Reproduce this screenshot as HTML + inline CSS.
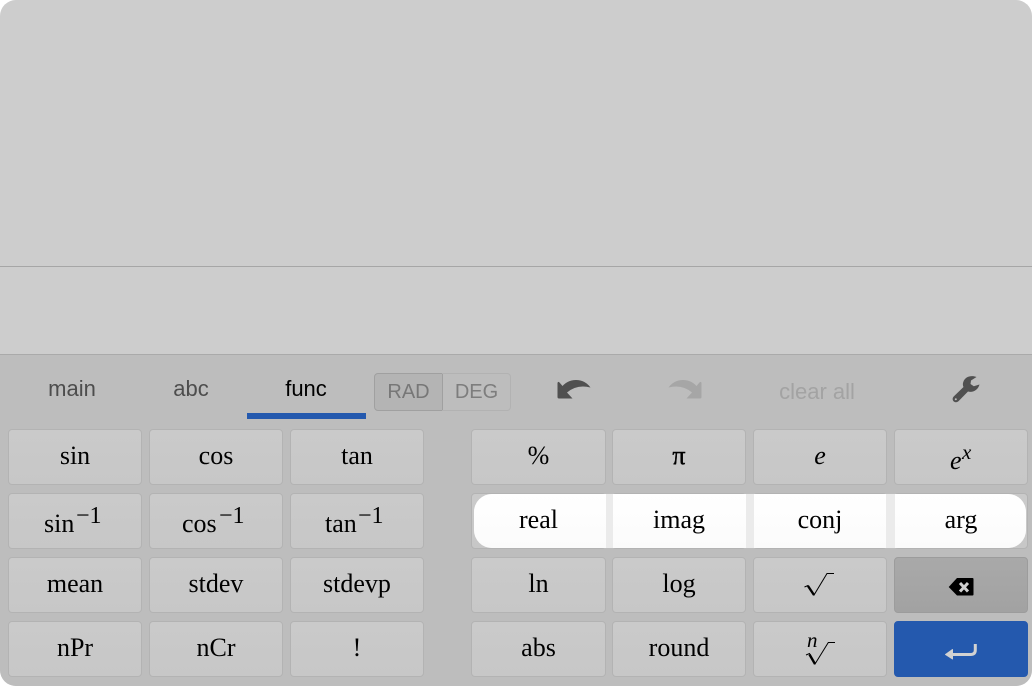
<!DOCTYPE html>
<html><head><meta charset="utf-8">
<style>
html,body{margin:0;padding:0;width:1032px;height:686px;overflow:hidden;background:#fff}
#app{position:absolute;left:0;top:0;width:1032px;height:686px;background:#cdcdcd;border-radius:16px;overflow:hidden}
.line{position:absolute;left:0;width:1032px;height:1px;background:#a6a6a6;top:266px}
#kb{position:absolute;left:0;top:354px;width:1032px;height:332px;background:#bdbdbd;border-top:1px solid #aaa;box-sizing:border-box}
.k{position:absolute;box-sizing:border-box;height:56px;border:1px solid #b3b3b3;border-radius:4px;background:linear-gradient(#cacaca,#c7c7c7);font:26px/51px "Liberation Serif",serif;color:#000;text-align:center}
.n{background:none;border-color:transparent}
.t{position:absolute;font-family:"Liberation Sans",sans-serif;white-space:nowrap;transform:translateX(-50%)}
.s{position:absolute;font:26px/30px "Liberation Serif",serif;color:#000;white-space:nowrap}
.u{position:absolute;font:24px/28px "Liberation Serif",serif;color:#000;white-space:nowrap}
i{font-family:"Liberation Serif",serif}
svg{position:absolute;overflow:visible}
</style></head><body>
<div id="app">
<div class="line"></div>
<div id="kb"></div>

<div class="t" style="left:72px;top:376px;font-size:22px;line-height:26px;color:#4d4d4d">main</div>
<div class="t" style="left:191px;top:376px;font-size:22px;line-height:26px;color:#4d4d4d">abc</div>
<div class="t" style="left:306px;top:376px;font-size:22px;line-height:26px;color:#000">func</div>
<div style="position:absolute;left:247px;top:413px;width:119px;height:6px;background:#2459ae"></div>

<div style="position:absolute;left:374px;top:373px;width:69px;height:38px;box-sizing:border-box;border:1px solid #a0a0a0;border-radius:4px 0 0 4px;background:#b4b4b4"></div>
<div style="position:absolute;left:442px;top:373px;width:69px;height:38px;box-sizing:border-box;border:1px solid #b2b2b2;border-left:0;border-radius:0 4px 4px 0"></div>
<div class="t" style="left:408.500px;top:380px;font-size:20px;line-height:24px;color:#777">RAD</div>
<div class="t" style="left:476.500px;top:380px;font-size:20px;line-height:24px;color:#7d7d7d">DEG</div>

<svg style="left:0;top:0" width="1032" height="686">
<path d="M557.500 383L557.500 397Q557.500 398.500 559 398.500L572.500 398.500L567 392.500Q577 384 590.500 387.500Q585 380 576 380Q568 380 562.500 386L559.500 382.500Q558 381 557.500 383Z" fill="#505050"/>
<path d="M701.500 383L701.500 397Q701.500 398.500 700 398.500L686.500 398.500L692 392.500Q682 384 668.500 387.500Q674 380 683 380Q691 380 696.500 386L699.500 382.500Q701 381 701.500 383Z" fill="#a6a6a6"/>
<path d="M976.500 377C971 375 964.500 376.500 963 383C962.700 384.500 963 386 963.500 387L953.700 396.500C952 398.300 952.500 400.500 954 401.600C955.500 402.700 957.500 402.300 958.700 401L968 391.500C973 392.800 978 390 979.500 384.500L973.800 386.300L970.500 384L971 380.500Z" fill="#505050"/>
<circle cx="955.800" cy="399.300" r="1" fill="#bdbdbd"/>
</svg>
<div class="t" style="left:817px;top:379px;font-size:22px;line-height:26px;color:#a3a3a3">clear all</div>

<div class="k" style="left:8px;top:429px;width:134px">sin</div>
<div class="k" style="left:149px;top:429px;width:134px">cos</div>
<div class="k" style="left:290px;top:429px;width:134px">tan</div>
<div class="k" style="left:471px;top:429px;width:135px">%</div>
<div class="k" style="left:612px;top:429px;width:134px;-webkit-text-stroke:.4px #000">π</div>
<div class="k" style="left:753px;top:429px;width:134px"><i>e</i></div>
<div class="k" style="left:894px;top:429px;width:134px"></div>
<div class="s" style="left:950px;top:446px"><i>e</i></div>
<div class="u" style="left:962px;top:438px;font-size:21px"><i>x</i></div>

<div class="k" style="left:8px;top:493px;width:134px"></div>
<div class="k" style="left:149px;top:493px;width:134px"></div>
<div class="k" style="left:290px;top:493px;width:134px"></div>
<div class="s" style="left:44px;top:509px">sin</div><div class="u" style="left:76px;top:502px">−1</div>
<div class="s" style="left:182px;top:509px">cos</div><div class="u" style="left:219px;top:502px">−1</div>
<div class="s" style="left:325px;top:509px">tan</div><div class="u" style="left:358px;top:502px">−1</div>

<div class="k" style="left:471px;top:493px;width:135px"></div>
<div class="k" style="left:612px;top:493px;width:134px"></div>
<div class="k" style="left:753px;top:493px;width:134px"></div>
<div class="k" style="left:894px;top:493px;width:134px"></div>
<div style="position:absolute;left:474px;top:494px;width:552px;height:54px;border-radius:18px;overflow:hidden;background:#ebebeb">
<div style="position:absolute;left:0;top:0;width:132px;height:54px;background:linear-gradient(#fff,#fbfbfb)"></div>
<div style="position:absolute;left:139px;top:0;width:133px;height:54px;background:linear-gradient(#fff,#fbfbfb)"></div>
<div style="position:absolute;left:280px;top:0;width:132px;height:54px;background:linear-gradient(#fff,#fbfbfb)"></div>
<div style="position:absolute;left:421px;top:0;width:131px;height:54px;background:linear-gradient(#fff,#fbfbfb)"></div>
</div>
<div class="k n" style="left:471px;top:493px;width:135px">real</div>
<div class="k n" style="left:612px;top:493px;width:134px">imag</div>
<div class="k n" style="left:753px;top:493px;width:134px">conj</div>
<div class="k n" style="left:894px;top:493px;width:134px">arg</div>

<div class="k" style="left:8px;top:557px;width:134px">mean</div>
<div class="k" style="left:149px;top:557px;width:134px">stdev</div>
<div class="k" style="left:290px;top:557px;width:134px">stdevp</div>
<div class="k" style="left:471px;top:557px;width:135px">ln</div>
<div class="k" style="left:612px;top:557px;width:134px">log</div>
<div class="k" style="left:753px;top:557px;width:134px"></div>
<div class="k" style="left:894px;top:557px;width:134px;background:linear-gradient(#a9a9a9,#a2a2a2);border-color:#9c9c9c"></div>

<div class="k" style="left:8px;top:621px;width:134px">nPr</div>
<div class="k" style="left:149px;top:621px;width:134px">nCr</div>
<div class="k" style="left:290px;top:621px;width:134px">!</div>
<div class="k" style="left:471px;top:621px;width:135px">abs</div>
<div class="k" style="left:612px;top:621px;width:134px">round</div>
<div class="k" style="left:753px;top:621px;width:134px"></div>
<div class="k" style="left:894px;top:621px;width:134px;background:#2459ae;border-color:#2459ae"></div>
<div style="position:absolute;left:807px;top:629px;font:italic 21px/22px 'Liberation Serif',serif;color:#000">n</div>

<svg style="left:0;top:0" width="1032" height="686">
<path d="M804.500 587L808 585.500L814 595L827 573.500L834 573.500" fill="none" stroke="#000" stroke-width="1"/>
<path d="M808 586L814 595" fill="none" stroke="#000" stroke-width="2.400"/>
<path d="M806 655L809.500 653.500L815 664L828.300 642.500L835 642.500" fill="none" stroke="#000" stroke-width="1"/>
<path d="M809.500 654.500L815 664" fill="none" stroke="#000" stroke-width="2.400"/>
<path d="M948.700 587L957 578L972.500 578Q973.500 578 973.500 579L973.500 594.500Q973.500 595.500 972.500 595.500L957 595.500Z" fill="#000"/>
<path d="M960 583L968 591.500M968 583L960 591.500" stroke="#d0d0d0" stroke-width="3" fill="none"/>
<path d="M975.300 644L975.300 650Q975.300 654.500 970.500 654.500L949 654.500" fill="none" stroke="#d2d2d2" stroke-width="3"/>
<path d="M945.500 654.500L952.500 649.500L952.500 659Z" fill="#d2d2d2" stroke="#d2d2d2" stroke-width="1" stroke-linejoin="round"/>
</svg>
</div>
</body></html>
